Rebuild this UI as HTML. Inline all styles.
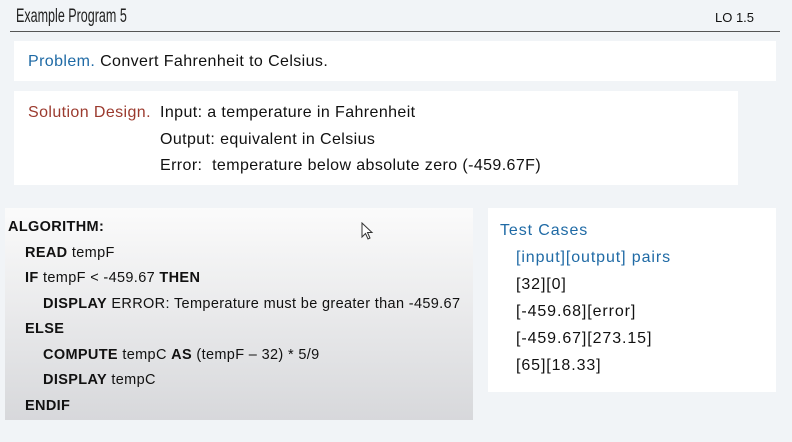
<!DOCTYPE html>
<html><head><style>
body{margin:0;width:792px;height:442px;background:#f1f4f7;font-family:"Liberation Sans",sans-serif;position:relative;overflow:hidden;color:#111}
.a{position:absolute}
.t{left:16px;top:6px;font-size:19px;color:#222;transform:scaleX(0.66);transform-origin:0 0;white-space:nowrap}
.lo{left:715px;top:10px;font-size:13px}
.line{left:10px;top:31px;width:770px;height:1px;background:#555}
.box{background:#fff}
.b{font-weight:bold}
.s{font-size:16px;letter-spacing:0.4px}
</style></head><body>
<div class="a t">Example Program 5</div>
<div class="a lo">LO 1.5</div>
<div class="a line"></div>
<div class="a box" style="left:14px;top:41px;width:762px;height:40px"></div>
<div class="a s" style="left:28px;top:53px"><span style="color:#1f6aa5">Problem.</span> Convert Fahrenheit to Celsius.</div>
<div class="a box" style="left:14px;top:91px;width:724px;height:94px"></div>
<div class="a s" style="left:28px;top:100px;line-height:26px;color:#9b3a2e">Solution Design.</div>
<div class="a s" style="left:160px;top:100px;line-height:26.5px;white-space:nowrap">Input: a temperature in Fahrenheit<br>Output: equivalent in Celsius<br>Error:&nbsp; temperature below absolute zero (-459.67F)</div>
<div class="a" style="left:5px;top:208px;width:468px;height:212px;background:linear-gradient(#fbfbfb,#d7d8db)"></div>
<div class="a" style="left:8px;top:215px;font-size:14.5px;line-height:25.5px;letter-spacing:0.35px;white-space:nowrap">
<div class="b">ALGORITHM:</div>
<div style="padding-left:17px"><span class="b">READ</span> tempF</div>
<div style="padding-left:17px"><span class="b">IF</span> tempF &lt; -459.67 <span class="b">THEN</span></div>
<div style="padding-left:35px"><span class="b">DISPLAY</span> ERROR: Temperature must be greater than -459.67</div>
<div style="padding-left:17px" class="b">ELSE</div>
<div style="padding-left:35px"><span class="b">COMPUTE</span> tempC <span class="b">AS</span> (tempF – 32) * 5/9</div>
<div style="padding-left:35px"><span class="b">DISPLAY</span> tempC</div>
<div style="padding-left:17px" class="b">ENDIF</div>
</div>
<svg class="a" style="left:361px;top:222px" width="14" height="20"><path d="M1 1 L1 15 L4.5 11.5 L7 17 L9 16 L6.5 10.5 L11 10.5 Z" fill="#fff" stroke="#333" stroke-width="1"/></svg>
<div class="a box" style="left:488px;top:208px;width:288px;height:184px"></div>
<div class="a s" style="left:500px;top:217px;line-height:27px;letter-spacing:0.9px">
<div style="color:#1f6aa5">Test Cases</div>
<div style="padding-left:16px;color:#1f6aa5">[input][output] pairs</div>
<div style="padding-left:16px">[32][0]</div>
<div style="padding-left:16px">[-459.68][error]</div>
<div style="padding-left:16px">[-459.67][273.15]</div>
<div style="padding-left:16px">[65][18.33]</div>
</div>
</body></html>
